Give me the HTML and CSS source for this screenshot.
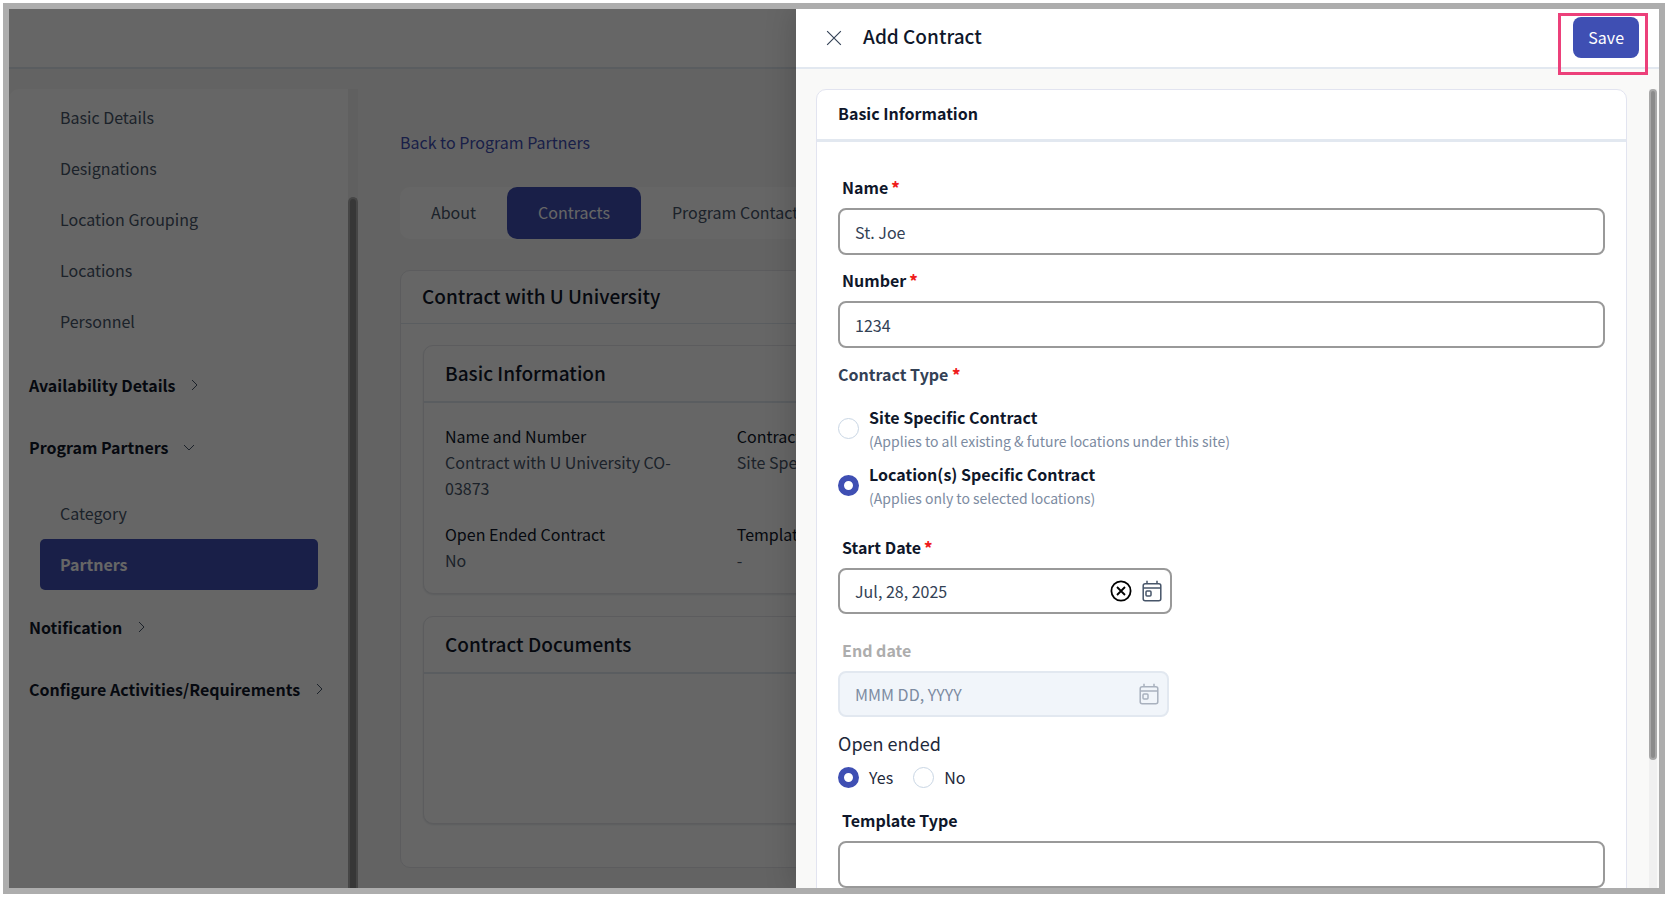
FILE: index.html
```html
<!doctype html>
<html lang="en">
<head>
    <meta charset="UTF-8">
    <meta name="viewport" content="width=device-width, initial-scale=1.0">
    <title>Add Contract</title>
    <link rel="stylesheet" href="styles.css">
</head>
<body>
<div class="frame">
    <div class="page">
        <header class="topbar"></header>
        <div class="columns">
            <nav class="sidebar">
                <div class="menu">
                    <ul>
                        <li><a href="#">Basic Details</a></li>
                        <li><a href="#">Designations</a></li>
                        <li><a href="#">Location Grouping</a></li>
                        <li><a href="#">Locations</a></li>
                        <li><a href="#">Personnel</a></li>
                    </ul>
                    <button class="group" type="button">Availability Details
                        <svg class="chevron" viewBox="0 0 12 12"><path d="M3 1l5 5-5 5"/></svg>
                    </button>
                    <button class="group" type="button">Program Partners
                        <svg class="chevron" viewBox="0 0 12 12"><path d="M1 4l5 5 5-5"/></svg>
                    </button>
                    <ul class="sub">
                        <li><a href="#">Category</a></li>
                        <li><a class="active" href="#">Partners</a></li>
                    </ul>
                    <button class="group" type="button">Notification
                        <svg class="chevron" viewBox="0 0 12 12"><path d="M3 1l5 5-5 5"/></svg>
                    </button>
                    <button class="group" type="button">Configure Activities/Requirements
                        <svg class="chevron" viewBox="0 0 12 12"><path d="M3 1l5 5-5 5"/></svg>
                    </button>
                </div>
                <div class="menu-scroll"><div class="menu-thumb"></div></div>
            </nav>

            <main class="main">
                <a class="back" href="#">Back to Program Partners</a>
                <div class="tabs">
                    <button type="button">About</button>
                    <button class="active" type="button">Contracts</button>
                    <button type="button">Program Contacts</button>
                </div>
                <section class="card">
                    <h2>Contract with U University</h2>
                    <div class="card-body">
                        <section class="card inner">
                            <h3>Basic Information</h3>
                            <dl>
                                <div><dt>Name and Number</dt><dd>Contract with U University CO-03873</dd></div>
                                <div><dt>Open Ended Contract</dt><dd>No</dd></div>
                                <div><dt>Contract Type</dt><dd>Site Specific</dd></div>
                                <div><dt>Template Type</dt><dd>-</dd></div>
                            </dl>
                        </section>
                        <section class="card inner">
                            <h3>Contract Documents</h3>
                            <div class="documents"></div>
                        </section>
                    </div>
                </section>
            </main>
        </div>
    </div>

    <div class="overlay"></div>

    <form class="drawer">
        <header class="drawer-head">
            <button class="close" type="button" aria-label="Close">
                <svg viewBox="0 0 14 14"><path d="M1 1l12 12M13 1L1 13"/></svg>
            </button>
            <h1>Add Contract</h1>
            <div class="highlight"><button class="save" type="submit">Save</button></div>
        </header>
        <div class="drawer-body">
            <section class="form-card">
                <h2>Basic Information</h2>
                <div class="fields">
                    <label class="label" for="name">Name<b>*</b></label>
                    <input class="text" id="name" type="text" value="St. Joe">

                    <label class="label" for="number">Number<b>*</b></label>
                    <input class="text" id="number" type="text" value="1234">

                    <fieldset class="type">
                        <legend>Contract Type <b>*</b></legend>
                        <label class="option">
                            <input type="radio" name="type">
                            <span><strong>Site Specific Contract</strong><small>(Applies to all existing &amp; future locations under this site)</small></span>
                        </label>
                        <label class="option">
                            <input type="radio" name="type" checked>
                            <span><strong>Location(s) Specific Contract</strong><small>(Applies only to selected locations)</small></span>
                        </label>
                    </fieldset>

                    <label class="label" for="start">Start Date<b>*</b></label>
                    <div class="date">
                        <input id="start" type="text" value="Jul, 28, 2025">
                        <button type="button" aria-label="Clear">
                            <svg class="clear" viewBox="0 0 22 22"><circle cx="11" cy="11" r="9.6"/><path d="M7 7l8 8M15 7l-8 8"/></svg>
                        </button>
                        <button type="button" aria-label="Pick a start date">
                            <svg class="calendar" viewBox="0 0 20 22"><rect x="1.2" y="3.8" width="17.6" height="17" rx="2"/><path d="M1.2 8h17.6M5 .8v3M15 .8v3"/><rect x="4" y="11" width="5" height="5" rx="1"/></svg>
                        </button>
                    </div>

                    <label class="label muted" for="end">End date</label>
                    <div class="date disabled">
                        <input id="end" type="text" placeholder="MMM DD, YYYY" disabled>
                        <button type="button" aria-label="Pick an end date" disabled>
                            <svg class="calendar" viewBox="0 0 20 22"><rect x="1.2" y="3.8" width="17.6" height="17" rx="2"/><path d="M1.2 8h17.6M5 .8v3M15 .8v3"/><rect x="4" y="11" width="5" height="5" rx="1"/></svg>
                        </button>
                    </div>

                    <fieldset class="open-ended">
                        <legend>Open ended</legend>
                        <label><input type="radio" name="open" checked>Yes</label>
                        <label><input type="radio" name="open">No</label>
                    </fieldset>

                    <label class="label" for="template">Template Type</label>
                    <input class="text" id="template" type="text">
                </div>
            </section>
            <div class="drawer-scroll"><div class="drawer-thumb"></div></div>
        </div>
    </form>
</div>
</body>
</html>
```
FILE: styles.css
```css
* {
    box-sizing: border-box;
    margin: 0;
    padding: 0;
}

body {
    background: #fff;
    color: #0f172a;
    font-family: "Noto Sans CJK SC", "Noto Sans", sans-serif;
    font-size: 16px;
    line-height: 26px;
}

button,
input {
    font: inherit;
    color: inherit;
}

button {
    border: 0;
    background: none;
}

ul {
    list-style: none;
}

a {
    text-decoration: none;
}

h1,
h2,
h3 {
    font-size: 19px;
    font-weight: 500;
}

svg {
    display: block;
    fill: none;
    stroke: currentColor;
}

.frame {
    position: relative;
    height: calc(100vh - 7px);
    margin: 3px 6px 4px 3px;
    border: 6px solid #adadad;
    overflow: hidden;
}

/* page behind the drawer */
.page {
    display: flex;
    flex-direction: column;
    height: 100%;
    background: #f8f8f7;
}

.topbar {
    flex: none;
    height: 60px;
    background: #fff;
    border-bottom: 2px solid #e2e8f0;
}

.columns {
    display: flex;
    flex: 1;
    min-height: 0;
}

.sidebar {
    display: flex;
    flex: none;
    width: 349px;
    margin-top: 20px;
}

.menu {
    flex: 1;
    padding-top: 3px;
    background: #fff;
    border-radius: 10px 0 0 0;
    overflow: hidden;
}

.menu ul {
    margin: 0 30px 7px 31px;
}

.menu .sub {
    margin-top: 10px;
    margin-bottom: 6px;
}

.menu a {
    display: block;
    padding: 12px 20px 13px;
    border-radius: 5px;
    color: #475569;
}

.menu .active {
    background: #3f4fb3;
    color: #fff;
    font-weight: 600;
}

.group {
    display: flex;
    align-items: center;
    gap: 14px;
    height: 62px;
    padding-left: 20px;
    font-weight: 600;
    white-space: nowrap;
}

.chevron {
    width: 12px;
    height: 12px;
    color: #475569;
}

.menu-scroll {
    width: 10px;
    padding-top: 108px;
    background: #f1f1f1;
}

.menu-thumb {
    height: 100%;
    background: #8b8b8b;
    border: solid #b0b0b0;
    border-width: 2px 2px 0;
    border-radius: 5px 5px 0 0;
}

.main {
    flex: 1;
    padding: 60px 42px 0;
}

.back {
    display: block;
    margin-bottom: 32px;
    color: #3f4fb3;
}

.tabs {
    display: flex;
    height: 52px;
    margin-bottom: 31px;
    background: #fff;
    border-radius: 10px;
}

.tabs button {
    padding: 0 31px 2px;
    border-radius: 10px;
    color: #475569;
}

.tabs .active {
    background: #3f4fb3;
    color: #fff;
}

.card {
    background: #fff;
    border: 1px solid #e5e7eb;
    border-radius: 10px;
}

.card h2 {
    padding: 12px 21px 14px;
    border-bottom: 1px solid #e2e8f0;
}

.card-body {
    display: grid;
    gap: 22px;
    padding: 21px 22px 43px;
}

.inner {
    box-shadow: 0 1px 2px #e5e7eb;
}

.card h3 {
    padding: 14px 21px 15px;
    border-bottom: 2px solid #e2e8f0;
}

.card dl {
    display: grid;
    grid-template-columns: repeat(4, 1fr);
    grid-template-rows: auto auto;
    grid-auto-flow: column;
    gap: 20px 40px;
    padding: 20px 21px;
}

.card dd {
    color: #475569;
}

.documents {
    height: 149px;
}

.overlay {
    position: absolute;
    inset: 0;
    background: rgba(0, 0, 0, 0.6);
}

/* drawer */
.drawer {
    position: absolute;
    top: 0;
    right: 0;
    bottom: 0;
    display: flex;
    flex-direction: column;
    width: 52.3%;
    background: #f9f9f8;
    box-shadow: 0 0 30px rgba(0, 0, 0, 0.2);
}

.drawer-head {
    display: flex;
    flex: none;
    align-items: center;
    height: 60px;
    padding: 0 11px 4px 30px;
    background: #fff;
    border-bottom: 2px solid #e2e8f0;
}

.close {
    padding-top: 3px;
}

.close svg {
    width: 16px;
    height: 16px;
    color: #334155;
}

.drawer-head h1 {
    margin-left: 21px;
}

/* the frame hangs below the header line */
.highlight {
    align-self: flex-start;
    height: 62px;
    margin: 4px 0 0 auto;
    padding: 1px 6px 0 12px;
    border: 3px solid #ec407a;
    z-index: 1;
}

.save {
    height: 41px;
    padding: 0 15px 2px;
    background: #3f4fb3;
    border-radius: 8px;
    color: #fff;
}

.drawer-body {
    display: flex;
    flex: 1;
    min-height: 0;
    padding: 20px 2px 0 20px;
}

.form-card {
    flex: 1;
    align-self: flex-start;
    background: #fff;
    border: 1px solid #e2e4f0;
    border-radius: 10px;
}

.form-card h2 {
    padding: 10px 21px 13px;
    border-bottom: 3px solid #e2e8f0;
    font-size: 16px;
    font-weight: 600;
}

.fields {
    padding: 32px 21px 22px;
}

.label {
    display: block;
    margin: 0 4px 8px;
    font-weight: 600;
}

.label b,
legend b {
    color: #ef1c1c;
}

.label b {
    margin-left: 3px;
}

.muted {
    color: #adadad;
}

.text {
    display: block;
    width: 100%;
    height: 47px;
    margin-bottom: 12px;
    padding: 0 15px;
    background: #fff;
    border: 2px solid #999;
    border-radius: 8px;
    color: #334155;
}

fieldset {
    border: 0;
}

.type {
    margin: 13px 0 16px;
}

.type legend {
    margin-bottom: 17px;
    color: #334155;
    font-weight: 600;
}

.option {
    display: flex;
    align-items: center;
    gap: 10px;
    margin-bottom: 9px;
}

.option strong,
.option small {
    display: block;
}

.option strong {
    font-weight: 600;
}

.option small {
    color: #7c8ba1;
    font-size: 14px;
    line-height: 22px;
}

input[type="radio"] {
    appearance: none;
    flex: none;
    width: 21px;
    height: 21px;
    background: #fff;
    border: 1px solid #c9d6e4;
    border-radius: 50%;
}

input[type="radio"]:checked {
    border: 6px solid #3f4fb3;
}

.date {
    display: flex;
    align-items: center;
    gap: 10px;
    width: 334px;
    height: 46px;
    margin-bottom: 23px;
    padding: 0 8px 0 15px;
    border: 2px solid #999;
    border-radius: 8px;
}

.date input {
    flex: 1;
    min-width: 0;
    border: 0;
    background: none;
    color: #334155;
}

.date svg {
    width: 20px;
    height: 22px;
    color: #475569;
    stroke-width: 1.5;
}

.date .clear {
    width: 22px;
    color: #000;
    stroke-width: 1.8;
}

.disabled {
    width: 331px;
    margin-bottom: 13px;
    background: #f1f5fa;
    border-color: #e2e8f0;
}

.disabled svg {
    color: #a9b1be;
}

.disabled input::placeholder {
    color: #7c8ba1;
    opacity: 1;
}

.open-ended {
    display: flex;
    gap: 20px;
    margin-bottom: 17px;
}

.open-ended legend {
    margin-bottom: 8px;
    color: #1e293b;
    font-size: 18px;
}

.open-ended label {
    display: flex;
    align-items: center;
    gap: 10px;
    color: #1e293b;
}

.drawer-scroll {
    flex: none;
    width: 8px;
    margin-left: 22px;
    background: #f0f0f0;
}

.drawer-thumb {
    height: 84%;
    background: #8b8b8b;
    border: 2px solid #a8a8a8;
    border-radius: 4px;
}
```
